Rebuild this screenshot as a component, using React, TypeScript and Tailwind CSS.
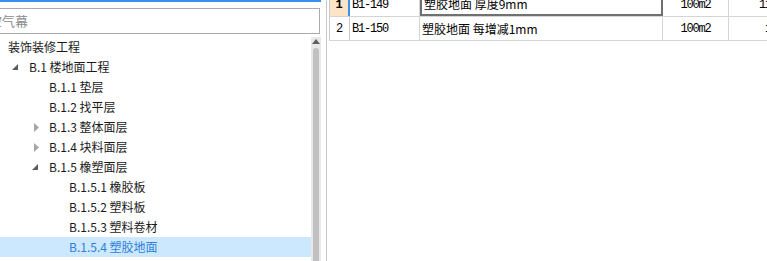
import React from 'react'

type Node = { label: string; level: number; arrow?: 'open' | 'closed'; selected?: boolean }

const nodes: Node[] = [
  { label: '装饰装修工程', level: 0 },
  { label: 'B.1 楼地面工程', level: 1, arrow: 'open' },
  { label: 'B.1.1 垫层', level: 2 },
  { label: 'B.1.2 找平层', level: 2 },
  { label: 'B.1.3 整体面层', level: 2, arrow: 'closed' },
  { label: 'B.1.4 块料面层', level: 2, arrow: 'closed' },
  { label: 'B.1.5 橡塑面层', level: 2, arrow: 'open' },
  { label: 'B.1.5.1 橡胶板', level: 3 },
  { label: 'B.1.5.2 塑料板', level: 3 },
  { label: 'B.1.5.3 塑料卷材', level: 3 },
  { label: 'B.1.5.4 塑胶地面', level: 3, selected: true },
]

const indents = ['pl-[8px]', 'pl-[29px]', 'pl-[49px]', 'pl-[69px]']

function Arrow({ kind }: { kind: 'open' | 'closed' }) {
  if (kind === 'open') {
    return (
      <svg width="7" height="7" viewBox="0 0 7 7" className="absolute left-[-17px] top-[7px]">
        <polygon points="6,0 6,6 0,6" fill="#5b5b5b" />
      </svg>
    )
  }
  return (
    <svg width="5" height="9" viewBox="0 0 5 9" className="absolute left-[-15px] top-[6px]">
      <polygon points="0,0 5,4.5 0,9" fill="#a6a6a6" />
    </svg>
  )
}

function TreeRow({ node }: { node: Node }) {
  return (
    <div className={`h-[20px] flex items-center ${indents[node.level]} ${node.selected ? 'bg-[#cce8ff] text-[#2f7fd8]' : 'text-[#1a1a1a]'}`}>
      <span className="relative leading-[20px]">
        {node.arrow && <Arrow kind={node.arrow} />}
        {node.label}
      </span>
    </div>
  )
}

const rows = [
  { n: '1', code: 'B1-149', name: '塑胶地面 厚度9mm', unit: '100m2', qty: '11.52', active: true },
  { n: '2', code: 'B1-150', name: '塑胶地面 每增减1mm', unit: '100m2', qty: '1.52', active: false },
]

export default function App() {
  return (
    <div className="w-[767px] h-[261px] overflow-hidden bg-white flex font-['Noto_Sans_CJK_SC','Noto_Sans',sans-serif] text-[12px]">
      <div className="w-[321px] shrink-0 flex flex-col">
        <div className="h-[2px] bg-[#3c8fe8]" />
        <div className="mt-[6px] h-[26px] ml-[-2px] mr-[1px] border border-[#ababab] flex items-center overflow-hidden">
          <span className="ml-[-10px] text-[#8c8c8c] text-[13px]">空气幕</span>
        </div>
        <div className="mt-[3px] flex flex-1 min-h-0">
          <div className="flex-1">
            {nodes.map((n) => (
              <TreeRow key={n.label} node={n} />
            ))}
          </div>
          <div className="w-[10px] bg-[#e8e8e8] flex flex-col items-center">
            <svg width="8" height="5" viewBox="0 0 8 5" className="mt-[2px]">
              <polygon points="4,0 8,5 0,5" fill="#606060" />
            </svg>
            <div className="mt-[4px] w-[6px] flex-1 bg-[#c1c1c1] rounded-t-[3px]" />
          </div>
        </div>
      </div>
      <div className="w-[5px] shrink-0" />
      <div className="flex-1 min-w-0 overflow-hidden border-l border-[#c8c8c8] pl-[2px] font-['Liberation_Mono','Noto_Sans_CJK_SC',monospace] text-[12px] text-black">
        <div className="mt-[-7px]">
          {rows.map((r) => (
            <div key={r.n} className="flex h-[24px] border-b border-[#d4d4d4]">
              <div
                className={`w-[21px] shrink-0 border-l border-[#c8c8c8] flex items-center justify-center ${
                  r.active ? 'bg-[#fce4c6] font-bold border-r-2 border-r-[#3c8fe8]' : 'border-r border-r-[#c8c8c8]'
                }`}
              >
                {r.n}
              </div>
              <div className="w-[70px] shrink-0 border-r border-[#d4d4d4] flex items-center pl-[2px] tracking-[-1.2px]">{r.code}</div>
              <div
                className={`w-[243px] shrink-0 flex items-center pl-[2px] font-['Noto_Sans_CJK_SC',sans-serif] ${
                  r.active ? 'border-x-2 border-b-2 border-[#707070]' : 'border-r border-[#d4d4d4]'
                }`}
              >
                {r.name}
              </div>
              <div className="w-[66px] shrink-0 border-r border-[#d4d4d4] flex items-center justify-center tracking-[-1.2px]">{r.unit}</div>
              <div className="w-[62px] shrink-0 flex items-center justify-end pr-[2px] tracking-[-1.2px]">{r.qty}</div>
            </div>
          ))}
        </div>
      </div>
    </div>
  )
}
